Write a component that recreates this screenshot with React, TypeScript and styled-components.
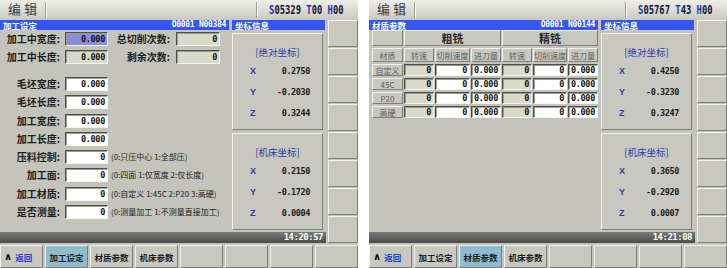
import React from 'react';
import styled, { createGlobalStyle, css } from 'styled-components';

const GlobalStyle = createGlobalStyle`
  html, body {
    margin: 0;
    padding: 0;
    background: #ffffff;
  }
  body {
    font-family: "Noto Sans CJK SC", "Noto Sans", sans-serif;
    color: #1a1a1a;
  }
`;

const MONO = `"DejaVu Sans Mono", "Liberation Mono", monospace`;

const raised = css`
  border-style: solid;
  border-width: 1px;
  border-color: #f2f2ea #7e7e78 #7e7e78 #f2f2ea;
`;

const sunken = css`
  border-style: solid;
  border-width: 1px;
  border-color: #4e4e4a #f6f6f0 #f6f6f0 #4e4e4a;
  box-shadow: inset 1px 1px 0 #9c9c96;
`;

const screens = [
  {
    status: { s: '05329', t: '00', h: '00' },
    title: '加工设定',
    code: 'O0001 N00384',
    time: '14:20:57',
    active: 1,
    abs: ['0.2750', '-0.2030', '0.3244'],
    mach: ['0.2150', '-0.1720', '0.0004'],
    kind: 'form',
  },
  {
    status: { s: '05767', t: '43', h: '00' },
    title: '材质参数',
    code: 'O0001 N00144',
    time: '14:21:08',
    active: 2,
    abs: ['0.4250', '-0.3230', '0.3247'],
    mach: ['0.3650', '-0.2920', '0.0007'],
    kind: 'table',
  },
];

const sizeRows = ['毛坯宽度:', '毛坯长度:', '加工宽度:', '加工长度:'];

const optionRows = [
  { label: '压料控制:', hint: '(0:只压中心 1:全部压)' },
  { label: '加工面:', hint: '(0:四面 1:仅宽度 2:仅长度)' },
  { label: '加工材质:', hint: '(0:自定义 1:45C 2:P20 3:高硬)' },
  { label: '是否测量:', hint: '(0:测量加工 1:不测量直接加工)' },
];

const materials = ['自定义', '45C', 'P20', '高硬'];
const subHeads = ['转速', '切削速度', '进刀量'];
const softKeys = ['', '加工设定', '材质参数', '机床参数', '', '', '', ''];

const FormView = () => (
  <FormArea>
    <FormGroup>
      <FormRow>
        <Label $width={60}>加工中宽度:</Label>
        <Field $width={43} $tone="selected">0.000</Field>
        <Label $width={62}>总切削次数:</Label>
        <Field $width={44} $gap={6} $tone="locked">0</Field>
      </FormRow>
      <FormRow>
        <Label $width={60}>加工中长度:</Label>
        <Field $width={43} $tone="locked">0.000</Field>
        <Label $width={62}>剩余次数:</Label>
        <Field $width={44} $gap={6} $tone="locked">0</Field>
      </FormRow>
    </FormGroup>
    <FormGroup $offset={13}>
      {sizeRows.map((label) => (
        <FormRow key={label}>
          <Label $width={60}>{label}</Label>
          <Field $width={43}>0.000</Field>
        </FormRow>
      ))}
      {optionRows.map((row) => (
        <FormRow key={row.label}>
          <Label $width={60}>{row.label}</Label>
          <Field $width={43}>0</Field>
          <Hint>{row.hint}</Hint>
        </FormRow>
      ))}
    </FormGroup>
  </FormArea>
);

const TableView = () => (
  <TableArea>
    <MaterialTable>
      <HeadCell />
      <HeadCell $span={3}>
        <GroupName>粗铣</GroupName>
      </HeadCell>
      <HeadCell $span={3}>
        <GroupName>精铣</GroupName>
      </HeadCell>
      <HeadCell>材质</HeadCell>
      {[...subHeads, ...subHeads].map((h, i) => (
        <HeadCell key={i}>{h}</HeadCell>
      ))}
      {materials.map((m) => (
        <React.Fragment key={m}>
          <HeadCell>{m}</HeadCell>
          <DataCell $tone="locked">0</DataCell>
          <DataCell>0</DataCell>
          <DataCell>0.000</DataCell>
          <DataCell $tone="locked">0</DataCell>
          <DataCell>0</DataCell>
          <DataCell>0.000</DataCell>
        </React.Fragment>
      ))}
    </MaterialTable>
  </TableArea>
);

const CoordBox = ({ title, values }) => (
  <CoordCard>
    <CoordHeading>{title}</CoordHeading>
    {['X', 'Y', 'Z'].map((axis, i) => (
      <CoordRow key={axis}>
        <Axis>{axis}</Axis>
        <CoordValue>{values[i]}</CoordValue>
      </CoordRow>
    ))}
  </CoordCard>
);

const Screen = ({ data }) => (
  <ScreenFrame>
    <TopBar>
      <Mode>编辑</Mode>
      <Separator />
      <Separator $push />
      <StatusWrap>
        <Status>
          <StatusKey>S</StatusKey>
          {data.status.s} <StatusKey>T</StatusKey>
          {data.status.t} <StatusKey>H</StatusKey>
          {data.status.h}
        </Status>
      </StatusWrap>
    </TopBar>
    <Middle>
      <Workspace>
        <TitleRow>
          <TitleBar>
            <span>{data.title}</span>
            <TitleCode>{data.code}</TitleCode>
          </TitleBar>
          <TitleBar>坐标信息</TitleBar>
        </TitleRow>
        <Content>
          {data.kind === 'form' ? <FormView /> : <TableView />}
          <CoordColumn>
            <CoordBox title="[绝对坐标]" values={data.abs} />
            <CoordBox title="[机床坐标]" values={data.mach} />
          </CoordColumn>
        </Content>
        <TimeBar>{data.time}</TimeBar>
      </Workspace>
      <SideKeys>
        {Array.from({ length: 8 }).map((_, i) => (
          <SideKey key={i} />
        ))}
      </SideKeys>
    </Middle>
    <BottomKeys>
      <SoftKey $align="left">
        <BackArrow>∧</BackArrow>
        <BackText>返回</BackText>
      </SoftKey>
      {softKeys.slice(1).map((label, i) => (
        <SoftKey key={i} $active={i + 1 === data.active}>
          {label}
        </SoftKey>
      ))}
    </BottomKeys>
  </ScreenFrame>
);

export default function App() {
  return (
    <>
      <GlobalStyle />
      <Page>
        {screens.map((s) => (
          <Screen key={s.title} data={s} />
        ))}
      </Page>
    </>
  );
}

const Page = styled.div`
  display: flex;
  gap: 11px;
  width: 727px;
  height: 268px;
`;

const ScreenFrame = styled.div`
  width: 358px;
  height: 268px;
  background: #c4c4bc;
  display: flex;
  flex-direction: column;
  overflow: hidden;
`;

const TopBar = styled.div`
  height: 20px;
  box-sizing: border-box;
  display: flex;
  align-items: center;
  padding: 0 14px 0 8px;
  background: linear-gradient(#eeeee8, #dadad2 55%, #c8c8c0);
`;

const Mode = styled.div`
  align-self: flex-start;
  width: 37px;
  height: 18.6px;
  font-size: 12.8px;
  line-height: 18.6px;
  letter-spacing: 3.5px;
  color: #3c3c3c;
  white-space: nowrap;
`;

const Separator = styled.div`
  width: 0;
  height: 16px;
  border-left: 1px solid #9c9c96;
  border-right: 1px solid #fbfbf5;
  margin-left: ${({ $push }) => ($push ? 'auto' : '0')};
`;

const StatusWrap = styled.div`
  width: 86px;
  display: flex;
  justify-content: flex-end;
`;

const Status = styled.div`
  font-family: ${MONO};
  font-weight: 700;
  font-size: 13px;
  line-height: 18px;
  color: #14163a;
  white-space: nowrap;
  transform: scaleX(0.68);
  transform-origin: right center;
`;

const StatusKey = styled.span`
  color: #1c34b8;
`;

const Middle = styled.div`
  height: 223px;
  display: flex;
  gap: 2px;
`;

const Workspace = styled.div`
  width: 326px;
  display: flex;
  flex-direction: column;
`;

const TitleRow = styled.div`
  height: 10px;
  display: grid;
  grid-template-columns: 229px 93px;
  column-gap: 3px;
`;

const TitleBar = styled.div`
  background: #3457f2;
  color: #ffffff;
  font-size: 8.5px;
  font-weight: 700;
  line-height: 10px;
  padding: 0 3px;
  display: flex;
  justify-content: space-between;
  white-space: nowrap;
`;

const TitleCode = styled.span`
  font-family: ${MONO};
  font-size: 8px;
  letter-spacing: -0.3px;
`;

const Content = styled.div`
  flex: 1;
  display: grid;
  grid-template-columns: 229px 93px;
  column-gap: 3px;
`;

const FormArea = styled.div`
  padding-top: 2px;
  display: flex;
  flex-direction: column;
`;

const FormGroup = styled.div`
  display: flex;
  flex-direction: column;
  gap: ${({ $offset }) => ($offset ? '4.3px' : '4px')};
  margin-top: ${({ $offset }) => $offset || 0}px;
`;

const FormRow = styled.div`
  height: 14px;
  display: flex;
  align-items: center;
`;

const Label = styled.div`
  width: ${({ $width }) => $width}px;
  flex: none;
  text-align: right;
  font-size: 10px;
  font-weight: 700;
  line-height: 14px;
  color: #1c1c1c;
  white-space: nowrap;
`;

const toneColor = {
  plain: '#ffffff',
  locked: '#dadac8',
  selected: '#8c8cdc',
};

const Field = styled.div`
  ${sunken};
  width: ${({ $width }) => $width}px;
  height: 14px;
  box-sizing: border-box;
  flex: none;
  margin-left: ${({ $gap }) => $gap ?? 5}px;
  background: ${({ $tone }) => toneColor[$tone || 'plain']};
  text-align: right;
  padding-right: 2px;
  font-family: ${MONO};
  font-weight: 700;
  font-size: 8.5px;
  line-height: 12px;
  letter-spacing: -0.3px;
  color: #111111;
`;

const Hint = styled.div`
  margin-left: 3px;
  font-size: 8px;
  line-height: 14px;
  color: #222222;
  white-space: nowrap;
`;

const TableArea = styled.div`
  padding-left: 3px;
`;

const MaterialTable = styled.div`
  display: grid;
  grid-template-columns: 31px 30px 35px 30px 30px 34px 30px;
  grid-template-rows: 16px 14px repeat(4, 12px);
  column-gap: 1px;
  row-gap: 2px;
`;

const HeadCell = styled.div`
  ${raised};
  grid-column: span ${({ $span }) => $span || 1};
  background: #c8c8c0;
  display: flex;
  align-items: center;
  justify-content: center;
  font-size: 8px;
  color: #5c5c5c;
  white-space: nowrap;
  overflow: hidden;
`;

const GroupName = styled.span`
  font-size: 11px;
  font-weight: 700;
  color: #2a2a2a;
`;

const DataCell = styled.div`
  ${sunken};
  background: ${({ $tone }) => toneColor[$tone || 'plain']};
  text-align: right;
  padding-right: 2px;
  font-family: ${MONO};
  font-weight: 700;
  font-size: 8.5px;
  line-height: 10px;
  letter-spacing: -0.3px;
  color: #111111;
`;

const CoordColumn = styled.div`
  display: flex;
  flex-direction: column;
  gap: 3px;
  padding: 3px 2px 2px 0;
`;

const CoordCard = styled.div`
  ${raised};
  flex: 1;
  background: #c8c8c0;
  padding-top: 12px;
  box-sizing: border-box;
`;

const CoordHeading = styled.div`
  text-align: center;
  font-size: 9.5px;
  line-height: 12px;
  color: #2b3aa8;
  margin-bottom: 7px;
  white-space: nowrap;
`;

const CoordRow = styled.div`
  height: 12px;
  margin-bottom: 9px;
  display: flex;
  justify-content: space-between;
  align-items: center;
  padding: 0 12px 0 17px;
`;

const Axis = styled.span`
  font-family: "Liberation Sans", sans-serif;
  font-size: 9px;
  font-weight: 700;
  color: #2b3aa8;
`;

const CoordValue = styled.span`
  font-family: ${MONO};
  font-size: 8.5px;
  font-weight: 700;
  letter-spacing: -0.4px;
  color: #1a1a1a;
`;

const TimeBar = styled.div`
  height: 11px;
  background: linear-gradient(#7a7a78, #4a4a48);
  color: #ffffff;
  font-family: ${MONO};
  font-weight: 700;
  font-size: 9px;
  line-height: 11px;
  letter-spacing: -0.5px;
  text-align: right;
  padding-right: 3px;
`;

const SideKeys = styled.div`
  width: 30px;
  display: grid;
  grid-template-rows: repeat(8, 1fr);
  row-gap: 1px;
`;

const SideKey = styled.div`
  ${raised};
  background: #c8c8c0;
`;

const BottomKeys = styled.div`
  height: 23px;
  margin-top: 2px;
  display: grid;
  grid-template-columns: repeat(8, 1fr);
  column-gap: 2px;
`;

const SoftKey = styled.div`
  ${raised};
  background: ${({ $active }) => ($active ? '#8dbcd0' : '#c8c8c0')};
  display: flex;
  align-items: center;
  justify-content: ${({ $align }) => ($align === 'left' ? 'flex-start' : 'center')};
  padding-left: ${({ $align }) => ($align === 'left' ? '3px' : '0')};
  font-size: 8.5px;
  font-weight: 700;
  color: #1c1c1c;
  white-space: nowrap;
`;

const BackArrow = styled.span`
  font-family: "DejaVu Sans", sans-serif;
  font-size: 10px;
  font-weight: 700;
  color: #111111;
  margin-right: 3px;
`;

const BackText = styled.span`
  color: #1d3cd0;
`;
